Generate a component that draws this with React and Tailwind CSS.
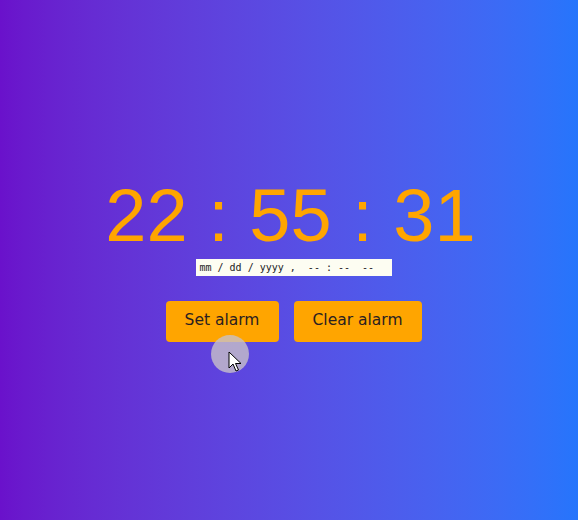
import React, { useState } from 'react'

export default function App() {
  const [time] = useState({ h: '22', m: '55', s: '31' })

  return (
    <div className="relative h-[520px] w-full overflow-hidden bg-gradient-to-r from-[#6a11cb] to-[#2575fc] flex flex-col items-center justify-center pl-[9px]">
      {/* Clock */}
      <div className="-ml-[6px] font-['Liberation_Sans',Arial,sans-serif] text-[74px] leading-none text-[#ffa500]">
        {time.h} : {time.m} : {time.s}
      </div>

      {/* Alarm date input */}
      <div className="mt-[6px] w-[196px] h-[17px] bg-[#fdfdf2] flex items-center pl-[4px] font-['DejaVu_Sans_Mono',monospace] text-[10px] text-[#222] whitespace-pre">
        <span>mm / dd / yyyy ,  -- : --  --</span>
      </div>

      {/* Buttons */}
      <div className="mt-[25px] flex gap-[15px] font-['DejaVu_Sans',sans-serif] text-[15.5px] text-[#2a2020]">
        <button className="w-[113px] h-[41px] rounded-[4px] bg-[#ffa500]">Set alarm</button>
        <button className="w-[128px] h-[41px] rounded-[4px] bg-[#ffa500]">Clear alarm</button>
      </div>

      {/* Recorded pointer highlight */}
      <div className="absolute left-[211px] top-[335px] w-[38px] h-[38px] rounded-full bg-[#c8c0c8]/80" />
      <svg className="absolute left-[228px] top-[351px]" width="14" height="22" viewBox="0 0 14 22">
        <path d="M1 1 L1 17 L5 13 L8 20 L10.5 19 L7.5 12.5 L13 12.5 Z" fill="#fff" stroke="#000" strokeWidth="1" strokeLinejoin="round" />
      </svg>
    </div>
  )
}
